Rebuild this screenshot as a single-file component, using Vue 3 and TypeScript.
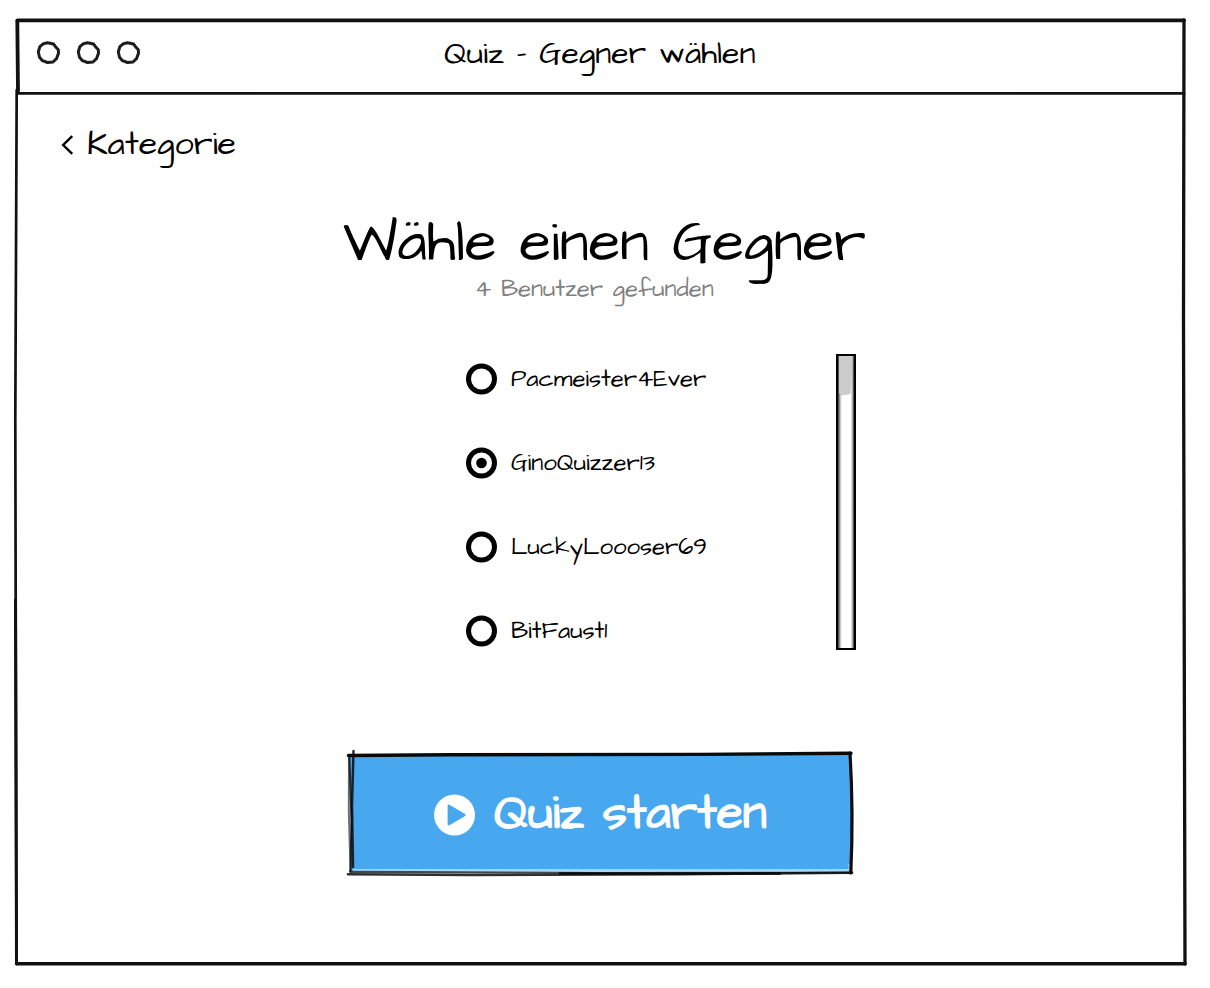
<script setup lang="ts">
import { ref } from 'vue'

const opponents: string[] = ['Pacmeister4Ever', 'GinoQuizzer13', 'LuckyLoooser69', 'BitFaust1']
const selected = ref('GinoQuizzer13')
</script>

<template>
  <main class="window">
    <svg class="outline" viewBox="0 0 1210 988" aria-hidden="true">
      <path d="M17.5 20.3 H1184" stroke-width="3.8" />
      <path d="M17.3 21 L18 91" stroke-width="3.8" />
      <path d="M16.7 90 L15.3 420 L16.5 964" stroke-width="2.7" />
      <path d="M15.5 600 L16.5 964" stroke-width="3" />
      <path d="M1184 20 L1183.5 320 L1185 964" stroke-width="3.3" />
      <path d="M17 963.8 H1185" stroke-width="3.6" />
      <path d="M18 93.4 H1184" stroke-width="2.7" />
    </svg>

    <header class="titlebar">
      <svg class="lights" width="106" height="26" viewBox="0 0 106 26" aria-hidden="true">
        <g v-for="x in [13.5, 53.5, 93.5]" :key="x" :transform="`translate(${x} 12.7)`">
          <path d="M-5 -9 L-1 -10 L5 -8.7 L7 -6 L9.8 -3 L10 .5 L8 6 L4.5 9.3 L-1 9.8 L-6 8 L-9 4.6 L-10.2 -1 L-8.6 -6Z" />
        </g>
      </svg>
      <h2 class="window-title">Quiz - Gegner wählen</h2>
    </header>

    <nav class="back">
      <svg width="13" height="20" viewBox="0 0 13 20" aria-hidden="true">
        <path d="M11.2 1.2 L2.2 10 L11.2 18.8" fill="none" stroke="#000" stroke-width="2.4" />
      </svg>
      <span class="back-label">Kategorie</span>
    </nav>

    <h1 class="heading">Wähle einen Gegner</h1>
    <p class="count">4 Benutzer gefunden</p>

    <section class="picker">
      <ul class="opponents">
        <li v-for="name in opponents" :key="name" class="opponent" @click="selected = name">
          <svg width="32" height="32" viewBox="0 0 32 32" aria-hidden="true">
            <circle cx="16.5" cy="16" r="13" fill="none" stroke="#000" stroke-width="5" />
            <circle v-if="selected === name" cx="16.5" cy="16" r="5.3" />
          </svg>
          <span>{{ name }}</span>
        </li>
      </ul>
      <svg class="scrollbar" width="20" height="296" viewBox="0 0 20 296" aria-hidden="true">
        <defs>
          <linearGradient id="edge" x1="0" x2="1" y1="0" y2="0">
            <stop offset="0" stop-color="#000" />
            <stop offset=".1" stop-color="#333" />
            <stop offset=".24" stop-color="#ddd" />
            <stop offset=".3" stop-color="#fff" />
            <stop offset=".74" stop-color="#fff" />
            <stop offset=".84" stop-color="#999" />
            <stop offset=".92" stop-color="#000" />
          </linearGradient>
        </defs>
        <rect width="20" height="296" fill="url(#edge)" />
        <path d="M3 2 H16.5 L15.5 22 L14.5 40 L5 41.5 L3 39Z" fill="#cbcbcb" />
        <path d="M1 1 H19 V295 H1Z" fill="none" stroke="#000" stroke-width="2" />
      </svg>
    </section>

    <button class="start" type="button">
      <svg class="start-outline" width="512" height="132" viewBox="344 748 512 132" aria-hidden="true">
        <path d="M350 755 L850 753.5 L852 812 L850 871 H351Z" fill="#47a8ef" />
        <path d="M353 870 H849.5 V864" class="shine" />
        <g class="ink">
          <path d="M348.5 755.5 L450 754.8 L700 754.4 L851 753.3" stroke-width="3.4" />
          <path d="M349 755 L348.8 810 L350.5 871" stroke-width="2" opacity=".6" />
          <path d="M353.5 751 L352 805 L353 867" stroke-width="2.5" opacity=".85" />
          <path d="M349.3 755 L351.5 820 L350.5 871" stroke-width="2" opacity=".8" />
          <path d="M850 753 Q853.6 813 850.8 873" stroke-width="3.2" />
          <path d="M350 871.8 L600 872.8 L852 872.5" stroke-width="2.2" opacity=".75" />
          <path d="M348 874.3 L470 875 L680 874.3 L852 872.8" stroke-width="2.6" opacity=".85" />
          <path d="M560 873.5 H780" stroke-width="2.4" />
        </g>
      </svg>
      <svg class="play" width="42" height="42" viewBox="0 0 42 42" aria-hidden="true">
        <circle cx="21.5" cy="21" r="20.5" fill="#fff" />
        <path d="M15.8 11.8 L31.5 21 L15.8 30.2Z" fill="#47a8ef" stroke="#47a8ef" stroke-width="2.4" stroke-linejoin="round" />
      </svg>
      <span class="start-label">Quiz starten</span>
    </button>
  </main>
</template>

<style>
body {
  background: #fff;
}
</style>

<style scoped>
.window {
  position: relative;
  display: flex;
  flex-direction: column;
  box-sizing: border-box;
  width: 1210px;
  height: 988px;
  padding: 20px 25px 23px 17px;
  overflow: hidden;
  color: #000;
  font-family: "Architects Daughter", Lato, sans-serif;
  white-space: nowrap;
}
.outline {
  position: absolute;
  inset: 0;
  width: 1210px;
  height: 988px;
  fill: none;
  stroke: #111;
  stroke-linecap: round;
  stroke-linejoin: round;
  pointer-events: none;
  filter: blur(0.6px);
}
.titlebar {
  display: flex;
  align-items: center;
  height: 73px;
}
.lights {
  flex: none;
  margin: -8px 0 0 18px;
  fill: none;
  stroke: #1c1c1c;
  stroke-width: 3;
  stroke-linejoin: round;
  filter: blur(0.6px);
}
.window-title {
  margin: -5px 0 0 303px;
  font-size: 32px;
  font-weight: 400;
  line-height: 36px;
}
.back {
  display: flex;
  align-items: center;
  gap: 13px;
  height: 40px;
  margin: 31px 0 0 44px;
}
.back svg {
  margin-top: 1px;
}
.back-label {
  font-size: 34px;
  line-height: 36px;
}
.heading {
  height: 64px;
  margin: 47px 0 0 326px;
  font-size: 58px;
  font-weight: 400;
  line-height: 64px;
}
.count {
  margin: -1px 0 0 458px;
  color: #808080;
  font-size: 24px;
  line-height: 30px;
}
.picker {
  display: flex;
  justify-content: space-between;
  width: 391px;
  margin: 50px 0 0 448px;
}
.opponents {
  display: flex;
  flex-direction: column;
  gap: 52px;
  margin: 0;
  padding: 9px 0 0;
  list-style: none;
}
.opponent {
  display: flex;
  align-items: center;
  gap: 14px;
  height: 32px;
  font-size: 24px;
  line-height: 32px;
}
.scrollbar {
  flex: none;
}
.start {
  position: relative;
  display: flex;
  align-items: center;
  gap: 19px;
  width: 504px;
  height: 121px;
  margin: 103px 0 0 332px;
  padding: 0 0 0 84px;
  border: 0;
  background: none;
  color: #fff;
  font-family: inherit;
}
.start-outline {
  position: absolute;
  top: -5px;
  left: -5px;
}
.ink {
  fill: none;
  stroke: #0a0a0a;
  stroke-linecap: round;
  stroke-linejoin: round;
  filter: blur(0.7px);
}
.shine {
  fill: none;
  stroke: #c8e4fb;
  stroke-width: 1.6;
}
.play {
  position: relative;
  flex: none;
  margin-top: 3px;
}
.start-label {
  position: relative;
  font-size: 48px;
  font-weight: 700;
  line-height: 50px;
}
</style>
